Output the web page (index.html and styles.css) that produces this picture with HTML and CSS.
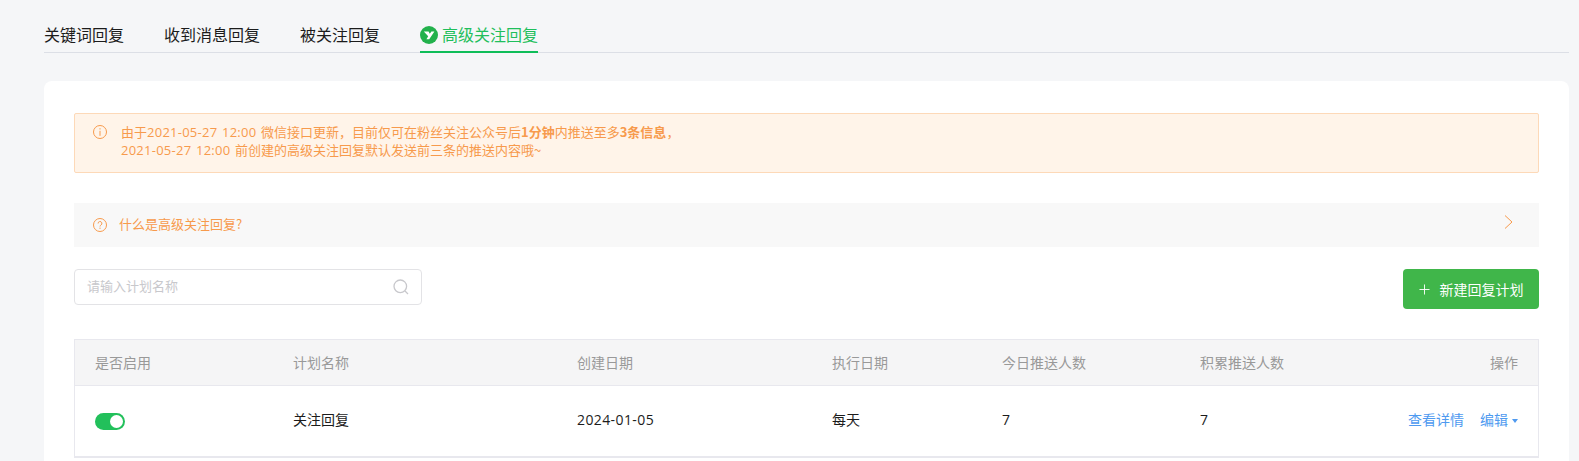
FILE: index.html
```html
<!DOCTYPE html>
<html lang="zh-CN">
<head>
<meta charset="utf-8">
<title>高级关注回复</title>
<link rel="stylesheet" href="styles.css">
</head>
<body>
<main class="page">
  <nav class="tabs">
    <a class="tab">关键词回复</a>
    <a class="tab">收到消息回复</a>
    <a class="tab">被关注回复</a>
    <a class="tab tab-active">
      <svg class="tab-logo" viewBox="0 0 18 18"><circle cx="9" cy="9" r="9" fill="#22b14c"/><path d="M3.8 5.4h4.8l1.2 2.4 1.6-2.4h3l-5.2 7.8H6.4l1.8-2.9z" fill="#fff"/></svg>
      高级关注回复
    </a>
  </nav>
  <section class="card">
    <div class="alert">
      <svg class="alert-icon" viewBox="0 0 14 14"><circle cx="7" cy="7" r="6.5" fill="none" stroke="currentColor"/><path d="M7 3.2v1.3M7 5.8v5" stroke="currentColor" fill="none"/></svg>
      <p class="alert-text">由于<span class="num">2021-05-27 12:00 </span>微信接口更新，目前仅可在粉丝关注公众号后<b>1分钟</b>内推送至多<b>3条信息</b>，<br><span class="num">2021-05-27 12:00 </span>前创建的高级关注回复默认发送前三条的推送内容哦~</p>
    </div>
    <div class="faq">
      <svg class="faq-icon" viewBox="0 0 14 14"><circle cx="7" cy="7" r="6.5" fill="none" stroke="currentColor"/><path d="M5.1 5.5a1.9 1.9 0 1 1 2.8 1.6c-.6.4-.9.7-.9 1.4M7 9.6v1.3" stroke="currentColor" fill="none"/></svg>
      <span class="faq-text">什么是高级关注回复?</span>
      <svg class="faq-arrow" viewBox="0 0 9 14"><path d="M1 .5 8 7l-7 6.5" fill="none" stroke="currentColor"/></svg>
    </div>
    <div class="toolbar">
      <div class="search">
        <span class="search-ph">请输入计划名称</span>
        <svg class="search-icon" viewBox="0 0 16 16"><circle cx="7.3" cy="7.3" r="6.3" fill="none" stroke="currentColor" stroke-width="1.3"/><path d="m12 12 3 3" fill="none" stroke="currentColor" stroke-width="1.3"/></svg>
      </div>
      <button class="add-btn"><svg class="plus" viewBox="0 0 12 12"><path d="M6 .5v11M.5 6h11" stroke="currentColor" fill="none"/></svg>新建回复计划</button>
    </div>
    <div class="table">
      <div class="row head">
        <span>是否启用</span><span>计划名称</span><span>创建日期</span><span>执行日期</span><span>今日推送人数</span><span>积累推送人数</span><span class="right">操作</span>
      </div>
      <div class="row body">
        <span><i class="switch"></i></span><span>关注回复</span><span class="num">2024-01-05</span><span>每天</span><span class="num">7</span><span class="num">7</span>
        <span class="right actions"><a class="link">查看详情</a><a class="link">编辑<i class="caret"></i></a></span>
      </div>
    </div>
  </section>
</main>
</body>
</html>
```
FILE: styles.css
```css
* { box-sizing: border-box; }
html, body { margin: 0; height: 100%; }
body {
  background: #f5f6f8;
  font-family: "Noto Sans CJK SC", "Noto Sans", sans-serif;
  overflow: hidden;
  color: #222;
}
.page { padding: 0 10px 0 44px; }
.tabs {
  display: flex;
  gap: 40px;
  height: 53px;
  padding-top: 23px;
  border-bottom: 1px solid #dcdfe6;
}
.tab {
  display: flex;
  align-items: flex-start;
  height: 30px;
  font-size: 16px;
  line-height: 22px;
  color: #1c1c1c;
}
.tab-active {
  color: #1fbf5c;
  border-bottom: 2px solid #0fbd59;
}
.tab-logo { width: 18px; height: 18px; margin: 3px 4px 0 0; }
.card {
  margin-top: 28px;
  padding: 32px 30px 0;
  background: #fff;
  border-radius: 8px 8px 0 0;
  height: 380px;
}
.alert {
  display: flex;
  height: 60px;
  padding: 9px 18px;
  background: #fff4e9;
  border: 1px solid #fdd9b8;
  border-radius: 2px;
  color: #f79a4c;
}
.alert-icon { width: 14px; height: 14px; margin: 2px 14px 0 0; flex: none; }
.alert-text { margin: 0; font-size: 13px; line-height: 18px; }
.alert-text b { font-weight: 700; }
.num { font-family: "Open Sans", "Noto Sans CJK SC", sans-serif; letter-spacing: .25px; }
.alert-text .num { word-spacing: 1px; }
.faq {
  display: flex;
  align-items: center;
  height: 44px;
  margin-top: 30px;
  padding: 0 19px;
  background: #f8f8f8;
  color: #f79a4c;
}
.faq-icon { width: 14px; height: 14px; margin: -1px 12px 0 0; }
.faq-text { font-size: 13px; flex: 1; margin-top: -3px; }
.faq-arrow { width: 9px; height: 14px; margin: -6px 7px 0 0; }
.toolbar {
  display: flex;
  justify-content: space-between;
  align-items: flex-start;
  margin-top: 22px;
}
.search {
  display: flex;
  align-items: center;
  justify-content: space-between;
  width: 348px;
  height: 36px;
  padding: 0 12px 0 12px;
  border: 1px solid #e3e3e6;
  border-radius: 4px;
  color: #c8c8cc;
}
.search-ph { font-size: 13px; margin-top: -3px; }
.search-icon { width: 16px; height: 16px; }
.add-btn {
  display: flex;
  align-items: center;
  justify-content: center;
  width: 136px;
  height: 40px;
  padding: 0;
  border: 0;
  border-radius: 4px;
  background: #40b64a;
  color: #fff;
  font: 400 14px "Noto Sans CJK SC", sans-serif;
}
.plus { width: 11px; height: 11px; margin-right: 10px; }
.table {
  margin-top: 30px;
  border: 1px solid #e8e8ee;
  border-bottom-width: 2px;
}
.row {
  display: grid;
  grid-template-columns: 198px 284px 255px 170px 198px 1fr auto;
  align-items: center;
  padding: 0 20px;
  font-size: 14px;
}
.head {
  height: 46px;
  background: #f5f5f6;
  border-bottom: 1px solid #e8e8ee;
  color: #999;
}
.head span { margin-top: -2px; }
.body { height: 70px; color: #1c1c1c; }
.body > span { margin-top: -4px; }
.body > span:first-child { margin-top: 0; }
.body .num { letter-spacing: .4px; }
.right { text-align: right; }
.switch {
  display: block;
  position: relative;
  width: 30px;
  height: 17px;
  border-radius: 9px;
  background: #22c05b;
}
.switch::after {
  content: "";
  position: absolute;
  right: 2px;
  top: 2px;
  width: 13px;
  height: 13px;
  border-radius: 50%;
  background: #fff;
}
.actions { display: flex; gap: 16px; }
.link { color: #4e9af0; }
.caret {
  display: inline-block;
  margin-left: 4px;
  vertical-align: 2px;
  border: 3px solid transparent;
  border-top: 4px solid #4e9af0;
  border-bottom: 0;
}
```
